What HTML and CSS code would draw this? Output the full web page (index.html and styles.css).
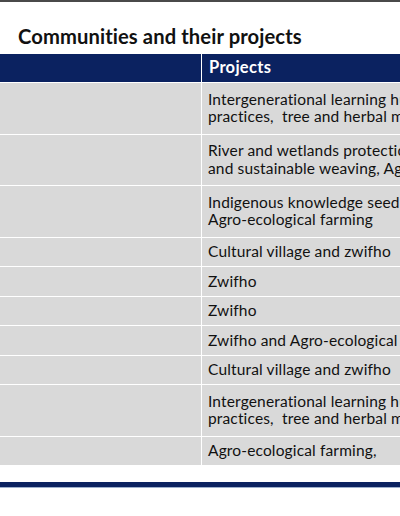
FILE: index.html
```html
<!DOCTYPE html>
<html lang="en">
<head>
<meta charset="utf-8">
<title>Communities and their projects</title>
<link rel="stylesheet" href="styles.css">
</head>
<body>
<div class="slide">
  <div class="top-rule"></div>
  <h1 class="title">Communities and their projects</h1>
  <div class="table">
    <div class="row head">
      <div class="c1"></div>
      <div class="c2">Projects</div>
    </div>
    <div class="row double">
      <div class="c1"></div>
      <div class="c2">Intergenerational learning hubs on indigenous farming<br>practices,&nbsp; tree and herbal medicine planting</div>
    </div>
    <div class="row double">
      <div class="c1"></div>
      <div class="c2">River and wetlands protection, indigenous crafts<br>and sustainable weaving, Agro-ecological farming</div>
    </div>
    <div class="row double">
      <div class="c1"></div>
      <div class="c2">Indigenous knowledge seed banks and<br>Agro-ecological farming</div>
    </div>
    <div class="row">
      <div class="c1"></div>
      <div class="c2">Cultural village and zwifho</div>
    </div>
    <div class="row">
      <div class="c1"></div>
      <div class="c2">Zwifho</div>
    </div>
    <div class="row">
      <div class="c1"></div>
      <div class="c2">Zwifho</div>
    </div>
    <div class="row">
      <div class="c1"></div>
      <div class="c2">Zwifho and Agro-ecological farming</div>
    </div>
    <div class="row">
      <div class="c1"></div>
      <div class="c2">Cultural village and zwifho</div>
    </div>
    <div class="row double">
      <div class="c1"></div>
      <div class="c2">Intergenerational learning hubs on indigenous farming<br>practices,&nbsp; tree and herbal medicine planting</div>
    </div>
    <div class="row">
      <div class="c1"></div>
      <div class="c2">Agro-ecological farming,</div>
    </div>
  </div>
  <div class="bottom-rule"></div>
</div>
</body>
</html>
```

FILE: styles.css
```css
html, body {
  margin: 0;
  padding: 0;
  background: #ffffff;
}

body {
  width: 400px;
  height: 516px;
  overflow: hidden;
  font-family: Lato, "Open Sans", sans-serif;
  font-variant-ligatures: none;
  color: #111111;
}

.slide {
  width: 400px;
  display: flex;
  flex-direction: column;
}

.top-rule {
  height: 1.5px;
  background: #4a4a4a;
}

.title {
  margin: 0;
  padding: 21px 0 0 18px;
  height: 31.5px;
  font-size: 20.2px;
  font-weight: 700;
  letter-spacing: 0.1px;
  line-height: 26px;
  color: #111111;
  white-space: nowrap;
}

.table {
  width: 560px;
  display: flex;
  flex-direction: column;
}

.row {
  display: flex;
  height: 29.5px;
  background: #d9d9d9;
  border-bottom: 1.5px solid #ffffff;
  box-sizing: border-box;
}

.row.double {
  height: 51.5px;
}

.row.head {
  height: 29px;
  background: #0b2260;
  color: #ffffff;
  font-weight: 700;
}

.c1 {
  width: 201px;
  flex: none;
  border-right: 1.5px solid #ffffff;
}

.c2 {
  flex: 1;
  padding-left: 6px;
  display: flex;
  align-items: center;
  font-size: 15.5px;
  letter-spacing: 0.15px;
  line-height: 17.3px;
  white-space: nowrap;
  overflow: hidden;
}

.row.head .c2 {
  padding-left: 7px;
  font-size: 16.5px;
  letter-spacing: 0.3px;
}

.bottom-rule {
  margin-top: 16px;
  height: 5px;
  background: #0b2260;
  border-bottom: 1px solid #9fb0cc;
}
```
